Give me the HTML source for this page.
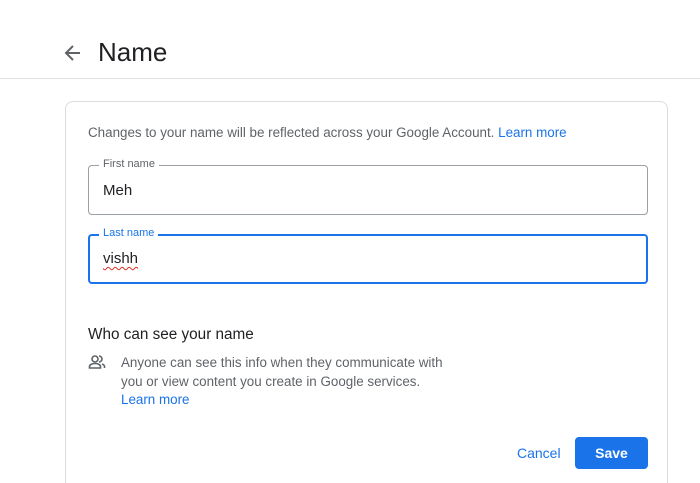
<!DOCTYPE html>
<html><head><style>
html,body{margin:0;width:700px;height:483px;overflow:hidden;background:#fff;font-family:"Liberation Sans",Arial,sans-serif;position:relative}
.a{position:absolute}
.hdr{left:0;top:78px;width:700px;height:1px;background:#e0e0e0}
.card{left:65px;top:101px;width:603px;height:382px;border:1px solid #dadce0;border-bottom:none;border-radius:8px 8px 0 0;box-sizing:border-box}
.f{left:88px;width:560px;height:50px;border:1px solid #9aa0a6;border-radius:4px;box-sizing:border-box}
.lbl{font-size:11px;background:#fff;padding:0 4px;left:99px;color:#5f6368}
.val{font-size:15px;color:#202124;left:103px}
</style></head><body>
<svg class="a" style="left:63px;top:44px" width="20" height="18" viewBox="0 0 20 18"><path d="M17 9H4M10 2L3 9l7 7" stroke="#5f6368" stroke-width="2" fill="none"/></svg>
<div class="a" style="left:98px;top:37px;font-size:26px;color:#202124">Name</div>
<div class="a hdr"></div>
<div class="a card"></div>
<div class="a" style="left:88px;top:125px;font-size:13.4px;color:#5f6368">Changes to your name will be reflected across your Google Account. <span style="color:#1a73e8">Learn more</span></div>
<div class="a f" style="top:165px"></div>
<div class="a lbl" style="top:158px">First name</div>
<div class="a val" style="top:182px">Meh</div>
<div class="a f" style="top:234px;border:2px solid #1a73e8"></div>
<div class="a lbl" style="top:227px;color:#1a73e8">Last name</div>
<div class="a val" style="top:250px;text-decoration:underline wavy #d93025;text-underline-offset:3px;text-decoration-thickness:1px">vishh</div>
<div class="a" style="left:88px;top:326px;font-size:15.3px;color:#202124">Who can see your name</div>
<svg class="a" style="left:88px;top:354px" width="18" height="16" viewBox="0 0 18 16"><circle cx="7" cy="5" r="3" stroke="#5f6368" stroke-width="1.6" fill="none"/><path d="M1.5 14v-1.5c0-2 3-3 5.5-3s5.5 1 5.5 3V14z" stroke="#5f6368" stroke-width="1.6" fill="none"/><path d="M11 2a3 3 0 010 6M14 10c1.5.5 2.5 1.5 2.5 2.5V14" stroke="#5f6368" stroke-width="1.6" fill="none"/></svg>
<div class="a" style="left:121px;top:354px;font-size:13.4px;line-height:18.5px;color:#5f6368">Anyone can see this info when they communicate with<br>you or view content you create in Google services.<br><span style="color:#1a73e8">Learn more</span></div>
<div class="a" style="left:517px;top:445px;font-size:14px;color:#1a73e8">Cancel</div>
<div class="a" style="left:575px;top:437px;width:73px;height:32px;background:#1a73e8;border-radius:4px;color:#fff;font-size:14px;font-weight:bold;text-align:center;line-height:32px">Save</div>
</body></html>
